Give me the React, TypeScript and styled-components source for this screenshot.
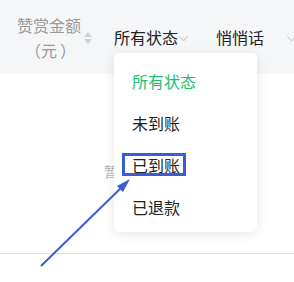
import React from 'react'
import styled, { createGlobalStyle } from 'styled-components'

const GlobalStyle = createGlobalStyle`
  html, body {
    margin: 0;
    padding: 0;
    background: #ffffff;
    font-family: "Noto Sans CJK SC", "Noto Sans", sans-serif;
  }
`

const Page = styled.div`
  position: relative;
  width: 294px;
  height: 282px;
  overflow: hidden;
`

const HeaderRow = styled.div`
  display: flex;
  align-items: center;
  height: 74px;
  background: #f5f6f8;
`

const Col = styled.div<{ $w: number; $pl?: number }>`
  display: flex;
  align-items: center;
  width: ${(p) => p.$w}px;
  padding-left: ${(p) => p.$pl || 0}px;
  flex-shrink: 0;
  box-sizing: border-box;
  white-space: nowrap;
`

const TwoLine = styled.div`
  width: 64px;
  text-align: center;
  font-size: 16px;
  line-height: 25px;
  color: #999999;
  margin-top: 2px;
`

const Paren = styled.span<{ $side: 'l' | 'r' }>`
  display: inline-block;
  width: 1em;
  text-align: ${(p) => (p.$side === 'l' ? 'right' : 'left')};
  padding: ${(p) => (p.$side === 'l' ? '0 3px 0 0' : '0 0 0 3px')};
  box-sizing: border-box;
`

const Label = styled.span`
  font-size: 16px;
  line-height: 20px;
  color: #222222;
`

const Chevron = styled.svg<{ $ml?: number }>`
  margin-left: ${(p) => p.$ml || 1}px;
  margin-top: 4px;
  flex-shrink: 0;
`

const SortIcon = styled.svg`
  margin-left: 3px;
  margin-top: 2px;
`

const Body = styled.div`
  height: 180px;
  border-bottom: 1px solid #e4e4e6;
  display: flex;
  align-items: flex-start;
  padding-left: 104px;
  box-sizing: border-box;
  padding-top: 87px;
`

const Empty = styled.span`
  font-size: 14px;
  color: #b5b5b5;
`

const Menu = styled.div`
  position: absolute;
  left: 114px;
  top: 53px;
  width: 143px;
  padding: 7px 0 4px;
  background: #ffffff;
  border-radius: 5px;
  box-shadow: 0 2px 12px rgba(0, 0, 0, 0.1);
`

const Item = styled.div<{ $active?: boolean }>`
  height: 42px;
  line-height: 42px;
  padding-left: 18px;
  font-size: 16px;
  color: ${(p) => (p.$active ? '#1dbf73' : '#222222')};
`

const Highlight = styled.div`
  position: absolute;
  left: 122px;
  top: 153px;
  width: 64px;
  height: 23px;
  border: 3px solid #3b5bd8;
  box-sizing: border-box;
`

const Arrow = styled.svg`
  position: absolute;
  left: 0;
  top: 0;
`

const App = () => {
  return (
    <Page>
      <GlobalStyle />
      <HeaderRow>
        <Col $w={114} $pl={17}>
          <TwoLine>
            赞赏金额
            <br />
            <Paren $side="l">（</Paren>元<Paren $side="r">）</Paren>
          </TwoLine>
          <SortIcon width="8" height="12" viewBox="0 0 8 12">
            <path d="M4 0 L8 5 L0 5 Z" fill="#cfd2d8" />
            <path d="M4 12 L8 7 L0 7 Z" fill="#cfd2d8" />
          </SortIcon>
        </Col>
        <Col $w={102}>
          <Label>所有状态</Label>
          <Chevron width="9" height="6" viewBox="0 0 9 6">
            <path d="M0.5 0.5 L4.5 5 L8.5 0.5" fill="none" stroke="#b9bcc2" strokeWidth="1" />
          </Chevron>
        </Col>
        <Col $w={78}>
          <Label>悄悄话</Label>
          <Chevron $ml={23} width="9" height="6" viewBox="0 0 9 6">
            <path d="M0.5 0.5 L4.5 5 L8.5 0.5" fill="none" stroke="#b9bcc2" strokeWidth="1" />
          </Chevron>
        </Col>
      </HeaderRow>
      <Body>
        <Empty>暂无数据</Empty>
      </Body>
      <Menu>
        <Item $active>所有状态</Item>
        <Item>未到账</Item>
        <Item>已到账</Item>
        <Item>已退款</Item>
      </Menu>
      <Highlight />
      <Arrow width="294" height="282" viewBox="0 0 294 282">
        <line x1="41" y1="266" x2="123" y2="186" stroke="#3b5bd8" strokeWidth="2" />
        <path d="M130 179 L117 186 L123 192 Z" fill="#3b5bd8" />
      </Arrow>
    </Page>
  )
}

export default App
